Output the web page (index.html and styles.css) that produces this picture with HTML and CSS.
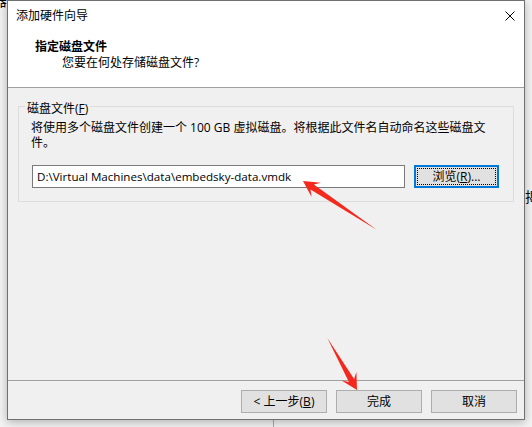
FILE: index.html
```html
<!DOCTYPE html>
<html lang="zh-CN">
<head>
<meta charset="utf-8">
<title>添加硬件向导</title>
<link rel="stylesheet" href="styles.css">
</head>
<body>
  <!-- application window behind the wizard -->
  <div class="app">
    <div class="app-col app-col-first"><span class="app-label">器</span></div>
    <div class="app-col"></div>
    <div class="app-col app-col-last"><span class="app-label">揭</span></div>
  </div>

  <!-- wizard dialog -->
  <div class="dialog">
    <div class="titlebar">
      <span class="title">添加硬件向导</span>
      <span class="close">
        <svg width="10" height="10" viewBox="0 0 10 10"><path d="M0.5 0.5L9.5 9.5M9.5 0.5L0.5 9.5" stroke="#000" stroke-width="1" fill="none"/></svg>
      </span>
    </div>
    <div class="header">
      <div class="header-title">指定磁盘文件</div>
      <div class="header-sub">您要在何处存储磁盘文件?</div>
    </div>
    <div class="content">
      <fieldset class="group">
        <legend>磁盘文件(<u>F</u>)</legend>
        <p class="desc">将使用多个磁盘文件创建一个 100 GB 虚拟磁盘。将根据此文件名自动命名这些磁盘文件。</p>
        <div class="path-row">
          <input class="path" type="text" value="D:\Virtual Machines\data\embedsky-data.vmdk">
          <button class="btn btn-focus" type="button">浏览(<u>R</u>)...</button>
        </div>
      </fieldset>
    </div>
    <div class="footer">
      <button class="btn btn-wide" type="button">&lt; 上一步(<u>B</u>)</button>
      <button class="btn btn-wide" type="button">完成</button>
      <button class="btn btn-wide" type="button">取消</button>
    </div>
  </div>

  <!-- red annotation arrows -->
  <svg class="marks" width="532" height="427" viewBox="0 0 532 427">
    <polygon fill="#f5281d" points="377,230 313.9,184.6 321,182.7 303,181 311.6,196.9 310.5,189.6"/>
    <polygon fill="#f5281d" points="327.3,338 348.9,382 341.6,380.4 357,390 356.4,371.9 354.1,379"/>
  </svg>
</body>
</html>
```

FILE: styles.css
```css
html, body {
  margin: 0;
  padding: 0;
}

body {
  position: relative;
  width: 532px;
  height: 427px;
  overflow: hidden;
  font-family: "Open Sans", "Noto Sans CJK SC", sans-serif;
  font-size: 12px;
  color: #000;
  background: #f0f0f0;
}

/* background application */
.app {
  display: grid;
  grid-template-columns: 274px 251px 7px;
  height: 427px;
  background: #f3f3f3;
}

.app-col-first {
  border-right: 1px solid #a8a8a8;
  overflow: hidden;
}

.app-col-first .app-label {
  display: block;
  margin: -8px 0 0 -7px;
  font-family: "Noto Sans CJK SC", sans-serif;
  font-size: 14px;
  line-height: 16px;
}

.app-col-last {
  overflow: hidden;
  padding-top: 187px;
}

.app-col-last .app-label {
  display: block;
  font-family: "Noto Sans CJK SC", sans-serif;
  font-size: 14px;
  line-height: 18px;
}

/* dialog */
.dialog {
  position: absolute;
  left: 7px;
  top: 0;
  width: 518px;
  height: 420px;
  box-sizing: border-box;
  border: 1px solid #707070;
  background: #f0f0f0;
  display: flex;
  flex-direction: column;
  box-shadow: 0 2px 9px rgba(0, 0, 0, 0.28);
}

.titlebar {
  height: 30px;
  flex: none;
  background: #fff;
  display: flex;
  align-items: center;
  justify-content: space-between;
  padding-left: 8px;
}

.title {
  line-height: 30px;
}

.close {
  width: 28px;
  height: 30px;
  display: flex;
  align-items: center;
  justify-content: center;
}

.header {
  flex: none;
  background: #fff;
  padding: 8px 0 16px 27px;
  border-bottom: 1px solid #a0a0a0;
  line-height: 16px;
}

.header-title {
  font-weight: bold;
}

.header-sub {
  padding-left: 27px;
}

.content {
  flex: 1;
  padding: 8px 10px 0;
}

.group {
  margin: 0;
  border: 1px solid #dcdcdc;
  padding: 3px 14px 13px 12px;
}

.group legend {
  margin-left: -6px;
  padding: 5px 2px 0;
  line-height: 16px;
}

.desc {
  margin: 0;
  padding-right: 8px;
  line-height: 15px;
}

.path-row {
  display: flex;
  gap: 9px;
  margin-top: 15px;
}

.path {
  box-sizing: border-box;
  width: 373px;
  height: 23px;
  margin: 0 0 0 1px;
  padding: 0 4px;
  border: 1px solid #7a7a7a;
  background: #fff;
  font: inherit;
  font-size: 11.6px;
  color: #000;
  outline: none;
}

.btn {
  box-sizing: border-box;
  height: 23px;
  margin: 0;
  padding: 0;
  border: 1px solid #adadad;
  background: #e1e1e1;
  font: inherit;
  line-height: 16px;
  color: #000;
}

.btn-focus {
  width: 85px;
  border: 2px solid #0078d7;
  outline: 1px dotted #000;
  outline-offset: -4px;
}

.btn-wide {
  width: 86px;
}

.footer {
  flex: none;
  display: flex;
  justify-content: flex-end;
  gap: 9px;
  padding: 9px 7px 6px;
  border-top: 1px solid #a0a0a0;
}

/* annotation layer */
.marks {
  position: absolute;
  left: 0;
  top: 0;
  pointer-events: none;
}
```
